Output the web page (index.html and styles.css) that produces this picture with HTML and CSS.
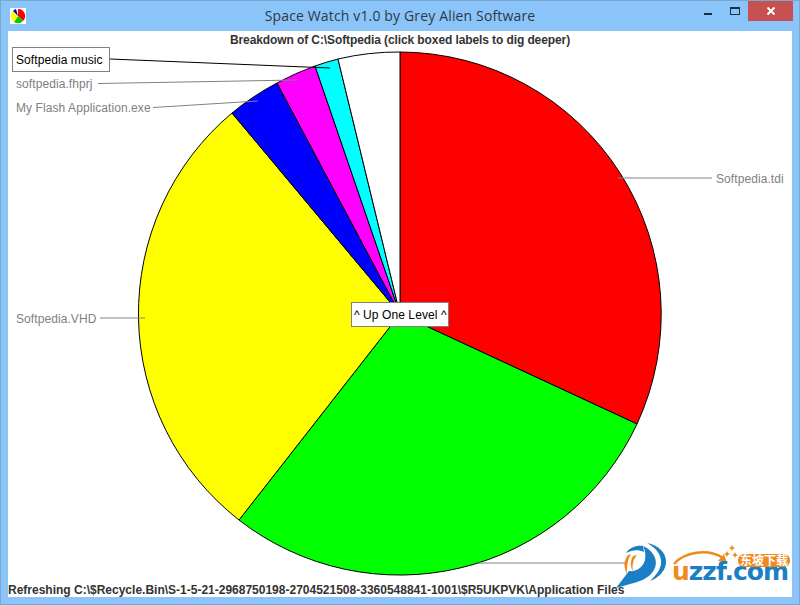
FILE: index.html
```html
<!DOCTYPE html>
<html lang="en">
<head>
    <meta charset="UTF-8">
    <title>Space Watch v1.0 by Grey Alien Software</title>
    <link rel="stylesheet" href="styles.css">
</head>
<body>
    <div class="window">
        <div class="titlebar">
            <svg class="app-icon" width="16" height="16" viewBox="0 0 16 16">
                <rect width="16" height="16" fill="#fff"/>
                <path d="M8 8 L8 1 A7 7 0 0 1 13 13 Z" fill="#f00"/>
                <path d="M8 8 L13 13 A7 7 0 0 1 4 14 Z" fill="#0c0"/>
                <path d="M8 8 L4 14 A7 7 0 0 1 3 3 Z" fill="#ff0"/>
                <path d="M8 8 L3 3 A7 7 0 0 1 6 1 Z" fill="#00c"/>
            </svg>
            <div class="title">Space Watch v1.0 by Grey Alien Software</div>
            <div class="controls">
                <div class="btn-min"></div>
                <div class="btn-max"></div>
                <div class="btn-close">
                    <svg width="8" height="8" viewBox="0 0 8 8"><path d="M0.5 0.5 L7.5 7.5 M7.5 0.5 L0.5 7.5" stroke="#fff" stroke-width="2"/></svg>
                </div>
            </div>
        </div>
        <div class="client">
            <div class="heading">Breakdown of C:\Softpedia (click boxed labels to dig deeper)</div>
            <svg class="chart" width="784" height="566" viewBox="8 31 784 566">
                <g stroke="#000" stroke-width="1">
                    <path d="M400 314 L400 52 A262 262 0 0 1 637 424 Z" fill="#f00"/>
                    <path d="M400 314 L637 424 A262 262 0 0 1 239 520 Z" fill="#0f0"/>
                    <path d="M400 314 L239 520 A262 262 0 0 1 232 113 Z" fill="#ff0"/>
                    <path d="M400 314 L232 113 A262 262 0 0 1 277 83 Z" fill="#00f"/>
                    <path d="M400 314 L277 83 A262 262 0 0 1 315 66 Z" fill="#f0f"/>
                    <path d="M400 314 L315 66 A262 262 0 0 1 338 59 Z" fill="#0ff"/>
                    <path d="M400 314 L338 59 A262 262 0 0 1 400 52 Z" fill="#fff"/>
                </g>
                <g stroke="#808080" stroke-width="1">
                    <line x1="618" y1="178" x2="712" y2="178"/>
                    <line x1="100" y1="318" x2="145" y2="318"/>
                    <line x1="98" y1="83.5" x2="297" y2="80"/>
                    <line x1="153" y1="107.5" x2="258" y2="101"/>
                    <line x1="478" y1="563" x2="625" y2="563"/>
                </g>
                <line x1="110" y1="59" x2="330" y2="68" stroke="#000"/>
                <text class="label" x="716" y="183">Softpedia.tdi</text>
                <text class="label" x="16" y="323">Softpedia.VHD</text>
                <text class="label" x="16" y="88">softpedia.fhprj</text>
                <text class="label" x="16" y="112">My Flash Application.exe</text>
                <rect class="box" x="12.5" y="47.5" width="97" height="24"/>
                <text class="label boxed" x="16" y="64">Softpedia music</text>
                <rect class="box" x="351.5" y="302.5" width="97" height="24"/>
                <text class="label boxed" x="354" y="319">^ Up One Level ^</text>
            </svg>
            <div class="status">Refreshing C:\$Recycle.Bin\S-1-5-21-2968750198-2704521508-3360548841-1001\$R5UKPVK\Application Files</div>
            <svg class="chart" width="784" height="566" viewBox="8 31 784 566">
                <g transform="translate(610 538)">
                    <path d="M37 5 C48 7 57 15 56 25 C55 34 48 40 40 43 C47 36 52 30 51 22 C50 14 44 9 37 5 Z" fill="#1a7fc4"/>
                    <path d="M33 8 C44 13 49 23 44 32 C39 41 28 44 20 46 L6 50 L19 33 C27 34 33 29 35 22 C36 16 35 12 33 8 Z" fill="#1a7fc4"/>
                    <path d="M33 8 C27 7 20 9 16 15 C22 12 28 11 34 14 Z" fill="#1a7fc4"/>
                    <path d="M18 17 C14 22 13 28 17 36 C17 29 17 23 21 16 Z" fill="#f08a1d"/>
                    <path d="M23 18 C20 23 20 29 23 33 C22 27 23 22 27 17 Z" fill="#f08a1d"/>
                </g>
                <path d="M674 564 C684 552 708 548 723 558" fill="none" stroke="#f08a1d" stroke-width="2.5"/>
                <path d="M718 561 L727 563 L724 554 Z" fill="#f08a1d"/>
                <path class="wm-star" d="M732 545 L733 547 L735 548 L733 549 L732 551 L731 549 L729 548 L731 547 Z"/>
                <path class="wm-star" d="M727 551 L728 553 L730 554 L728 555 L727 557 L726 555 L724 554 L726 553 Z"/>
                <path class="wm-star" d="M735 552 L736 554 L738 555 L736 556 L735 558 L734 556 L732 555 L734 554 Z"/>
                <text class="wm-name" x="672" y="580" textLength="117"><tspan class="wm-u">u</tspan>zzf.com</text>
                <rect class="wm-badge" x="738" y="554" width="52" height="13" rx="6"/>
                <text class="wm-cn" x="740" y="565">东坡下载</text>
            </svg>
        </div>
    </div>
</body>
</html>
```

FILE: styles.css
```css
html, body {
    margin: 0;
    height: 100%;
    overflow: hidden;
}
.window {
    box-sizing: border-box;
    width: 800px;
    height: 605px;
    display: flex;
    flex-direction: column;
    background-color: #8ac4f8;
    border: 1px solid #78a8d4;
    padding: 0 7px 7px 7px;
}
.titlebar {
    height: 30px;
    flex: none;
    display: flex;
    align-items: center;
    position: relative;
}
.app-icon {
    margin: 0 0 0 2px;
}
.title {
    position: absolute;
    left: 0;
    right: 0;
    top: 5px;
    text-align: center;
    font-family: "Open Sans", sans-serif;
    font-size: 14px;
    letter-spacing: 0.15px;
    color: #2b3a48;
}
.controls {
    margin-left: auto;
    margin-right: -1px;
    display: flex;
    align-items: flex-start;
    align-self: flex-start;
}
.btn-min {
    width: 8px;
    height: 2px;
    background-color: #14304c;
    margin: 12px 18px 0 0;
}
.btn-max {
    box-sizing: border-box;
    width: 10px;
    height: 8px;
    border: 1px solid #14304c;
    border-top-width: 2px;
    margin: 6px 8px 0 0;
}
.btn-close {
    width: 45px;
    height: 20px;
    background-color: #c75050;
    display: flex;
    align-items: center;
    justify-content: center;
}
.client {
    flex: 1;
    position: relative;
    background-color: #fff;
    overflow: hidden;
    font-family: "Liberation Sans", Arial, sans-serif;
}
.heading {
    text-align: center;
    font-size: 12px;
    font-weight: bold;
    letter-spacing: -0.1px;
    color: #333;
    line-height: 18px;
    position: relative;
    z-index: 1;
}
.chart {
    position: absolute;
    left: 0;
    top: 0;
}
.label {
    font-size: 12px;
    fill: #808080;
    letter-spacing: 0.08px;
}
.boxed {
    fill: #000;
}
.box {
    fill: #fff;
    stroke: #808080;
}
.status {
    position: absolute;
    left: 0;
    bottom: 0;
    font-size: 12px;
    font-weight: bold;
    color: #333;
    white-space: nowrap;
}
.wm-star {
    fill: #f08a1d;
}
.wm-badge {
    fill: #f08a1d;
}
.wm-name {
    font-family: "DejaVu Sans", sans-serif;
    font-weight: bold;
    font-size: 25px;
    fill: #1a7fc4;
}
.wm-u {
    fill: #f08a1d;
}
.wm-cn {
    font-family: "Noto Sans CJK SC", sans-serif;
    font-size: 12px;
    font-weight: bold;
    fill: #fff;
}
```
